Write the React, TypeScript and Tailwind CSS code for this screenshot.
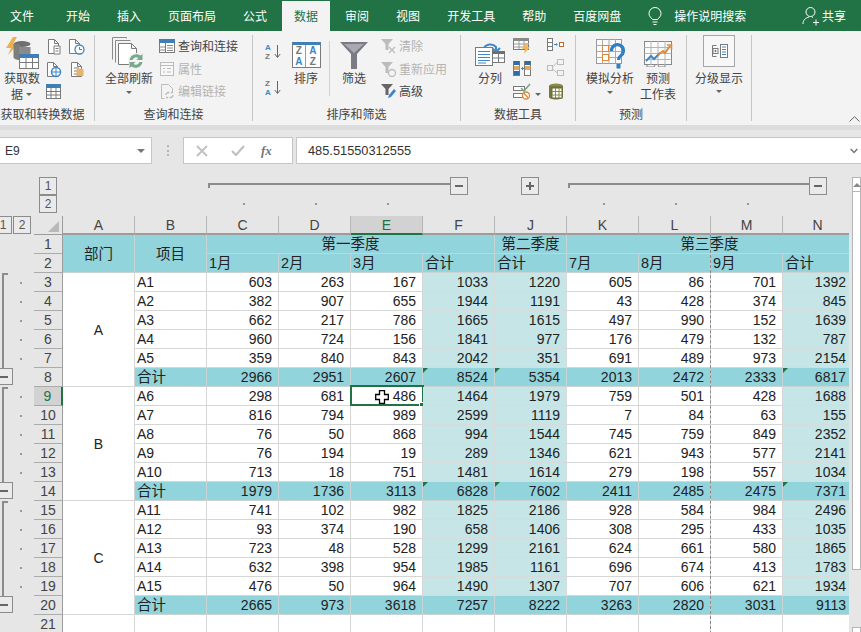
import React from 'react';

const line = '#7a7a7a';
const blue = '#3b87c8';
const orange = '#d98a3c';
const dim = '#bcbcbc';

type IconProps = { w?: number; h?: number; children: React.ReactNode };
const Svg: React.FC<IconProps> = ({ w = 18, h = 18, children }) => (
  <svg width={w} height={h} viewBox={`0 0 ${w} ${h}`} fill="none" className="block shrink-0">
    {children}
  </svg>
);

const Page = ({ c = line }: { c?: string }) => (
  <path d="M2.5 1.5h6l4 4v10h-10z M8.5 1.5v4h4" stroke={c} fill="#fff" />
);

const GetDataIcon = () => (
  <Svg w={36} h={34}>
    <path d="M9 1 2 12h5l-3 7 10-11H9l4-7z" fill="#eeb04f" />
    <ellipse cx="18" cy="8" rx="8.5" ry="3" fill="#6f6f6f" />
    <path d="M9.5 8v13c0 2 3 3 6 3V8z" fill="#7d7d7d" />
    <path d="M15 11h11.500v7H15z" fill="#8a8a8a" />
    <rect x="15.500" y="18.500" width="19" height="14" fill="#fff" stroke={line} />
    <rect x="15" y="18" width="20" height="4" fill="#3f7fb8" />
    <path d="M15.500 26.500h19M22 22v10M28.500 22v10" stroke={line} />
  </Svg>
);

const TableSmall = () => (
  <Svg w={17} h={17}>
    <rect x="1.500" y="1.500" width="14" height="14" fill="#fff" stroke={line} />
    <rect x="1" y="1" width="15" height="4" fill="#3f7fb8" />
    <path d="M1.500 8.500h14M1.500 12h14M6 5v10M11 5v10" stroke={line} />
  </Svg>
);

const RefreshAll = () => (
  <Svg w={36} h={34}>
    <path d="M1.500 1.500h14v1M1.500 1.500v22M4.500 4.500h15M4.500 4.500v22" stroke="#8a8a8a" fill="none" />
    <path d="M7.500 7.500h13l5 5v14l-2 2h-16z M20.500 7.500v5h5" stroke={line} fill="#fff" />
    <circle cx="25" cy="25" r="8" fill="#f3f3f3" />
    <path d="M18.500 24a7 7 0 0 1 11-4.500l2-1.500v6h-6l2-2a4 4 0 0 0-6 2z" fill="#79a98a" />
    <path d="M31.500 26a7 7 0 0 1-11 4.500l-2 1.500v-6h6l-2 2a4 4 0 0 0 6-2z" fill="#79a98a" />
  </Svg>
);

const ConnIcon = () => (
  <Svg w={17} h={15}>
    <rect x=".5" y=".5" width="15" height="13" fill="#fff" stroke={line} />
    <rect x="0" y="0" width="16" height="4" fill="#3f7fb8" />
    <path d="M1 8h5M1 11h5M8 6.500h6M8 9h6M8 11.500h6" stroke="#8a8a8a" />
    <path d="M6.500 4v10" stroke={line} />
  </Svg>
);

const PropsIcon = () => (
  <Svg w={16} h={16}>
    <rect x="1.500" y="1.500" width="13" height="13" stroke={dim} fill="#f7f7f7" />
    <path d="M1.500 4.500h13M4 7.500h2M8 7.500h4M4 11h2M8 11h4" stroke={dim} />
  </Svg>
);

const EditLinks = () => (
  <Svg w={17} h={17}>
    <path d="M2.500 1.500h7l4 4v4M2.500 1.500v14h3" stroke={dim} />
    <path d="M7 12a2.500 2.500 0 0 1 2.500-2.500h1M14 12a2.500 2.500 0 0 1-2.500 2.500h-1M7 14.500h2M12 9.500h2" stroke={dim} strokeWidth="1.300" />
  </Svg>
);

const SortAZ = ({ flip }: { flip?: boolean }) => (
  <div className="relative h-[18px] w-[16px] font-['Liberation_Sans',sans-serif] text-[8px] font-bold leading-[9px]">
    <div className={flip ? 'text-[#777]' : 'text-[#3b87c8]'}>{flip ? 'Z' : 'A'}</div>
    <div className={flip ? 'text-[#3b87c8]' : 'text-[#777]'}>{flip ? 'A' : 'Z'}</div>
    <svg width="7" height="14" viewBox="0 0 7 14" className="absolute right-0 top-[2px]">
      <path d="M3.500 0v12M.8 9l2.700 3.500L6.200 9" stroke="#666" fill="none" />
    </svg>
  </div>
);

const SortBig = () => (
  <div className="grid h-[26px] w-[29px] grid-cols-2 border border-[#7a7a7a] border-t-[3px] border-t-[#3f7fb8] bg-white font-['Liberation_Sans',sans-serif] text-[10px] font-bold leading-[11px]">
    <div className="border-r border-[#999] text-center text-[#777]">Z<div className="text-[#3b87c8]">A</div></div>
    <div className="text-center text-[#3b87c8]">A<div className="text-[#777]">Z</div></div>
  </div>
);

const Funnel = () => (
  <Svg w={28} h={27}>
    <path d="M0 0h28L17 12v15h-6V12z" fill="#7b7b85" />
    <path d="M4 2h20l-10 9z" fill="#a9a9b0" />
  </Svg>
);

const SmallFunnel = ({ c, children }: { c: string; children?: React.ReactNode }) => (
  <Svg w={17} h={16}>
    <path d="M1 1h12L8.500 6v6h-3V6z" fill={c} />
    {children}
  </Svg>
);

const TextToCols = () => (
  <Svg w={30} h={27}>
    <path d="M9 8a7 6 0 0 1 12-1l0 3" stroke={blue} strokeWidth="2" />
    <path d="M17 8l4 4 4-4" stroke={blue} strokeWidth="2" />
    <rect x=".5" y="7.500" width="17" height="18" fill="#fff" stroke={line} />
    <path d="M3 11.500h12M3 14.500h12M3 17.500h12M3 20.500h12M3 23h8" stroke={blue} />
    <rect x="17.500" y="11.500" width="12" height="11" fill="#fff" stroke={line} />
    <rect x="17" y="11" width="13" height="3" fill="#6f6f6f" />
    <path d="M23.500 14v8M18 18h11" stroke={line} />
  </Svg>
);

const FlashFill = () => (
  <Svg w={18} h={16}>
    <rect x=".5" y=".5" width="15" height="11" fill="#fff" stroke={line} />
    <rect x="0" y="0" width="16" height="3" fill="#8a8a8a" />
    <path d="M1 6h14M1 9h14M6 3v8M11 3v8" stroke="#9a9a9a" />
    <path d="M13 5 9 11h3l-1 5 6-7h-3l2-4z" fill="#efb65c" />
  </Svg>
);

const RemoveDup = () => (
  <Svg w={18} h={17}>
    <rect x=".5" y="1.500" width="6" height="14" fill="#fff" stroke={line} />
    <rect x="11.500" y="1.500" width="6" height="14" fill="#fff" stroke={line} />
    <rect x="1" y="1" width="5.500" height="4" fill="#2f6da8" />
    <rect x="1" y="6" width="5.500" height="4" fill="#e0a860" />
    <rect x="1" y="11" width="5.500" height="4" fill="#2f6da8" />
    <rect x="12" y="1" width="5.500" height="4" fill="#2f6da8" />
    <rect x="12" y="6" width="5.500" height="4" fill="#e0a860" />
    <path d="M8 8.500h3M9.500 7v3" stroke={blue} />
  </Svg>
);

const Validate = () => (
  <Svg w={18} h={17}>
    <rect x=".5" y="3.500" width="11" height="4" fill="#fff" stroke={line} />
    <rect x=".5" y="10.500" width="9" height="4" fill="#fff" stroke={line} />
    <path d="M8 5l3 3 6-7" stroke="#7fa58c" strokeWidth="1.600" />
    <circle cx="13" cy="12.500" r="3.500" fill="#fff" stroke={orange} strokeWidth="1.300" />
    <path d="M10.800 10.300l4.400 4.400" stroke={orange} strokeWidth="1.300" />
  </Svg>
);

const Consolidate = () => (
  <Svg w={17} h={14}>
    <rect x=".5" y=".5" width="5" height="12" fill="#fff" stroke={line} />
    <path d="M.5 4.500h5M.5 8.500h5" stroke={line} />
    <path d="M7 6.500h3" stroke={blue} />
    <path d="M9 5l2 1.500L9 8z" fill={blue} />
    <rect x="12.500" y="4.500" width="4" height="4" fill="#fff" stroke="#c0672a" />
  </Svg>
);

const Relations = () => (
  <Svg w={17} h={17}>
    <rect x=".5" y="6.500" width="5" height="5" stroke={dim} />
    <rect x="10.500" y=".5" width="6" height="5" stroke={dim} />
    <rect x="10.500" y="11.500" width="6" height="5" stroke={dim} />
    <path d="M5.500 8l5-5M5.500 10l5 4" stroke={dim} />
  </Svg>
);

const DataModel = () => (
  <Svg w={16} h={17}>
    <ellipse cx="8" cy="3" rx="7" ry="2.500" fill="#8a8a4a" />
    <path d="M1 3v11c0 1.500 3 2.500 7 2.500s7-1 7-2.500V3z" fill="#77773a" />
    <rect x="4" y="5" width="10" height="10" fill="#fff" stroke="#6b6b35" />
    <path d="M4 8.500h10M4 12h10M7.500 5v10M11 5v10" stroke="#8a8a4a" />
  </Svg>
);

const WhatIf = () => (
  <Svg w={29} h={31}>
    <rect x=".5" y=".5" width="25" height="24" fill="#fbfbfb" stroke="#999" />
    <path d="M.5 6.500h25M.5 12.500h25M.5 18.500h25M6.500 0v25M13 0v25M19.500 0v25" stroke="#aaa" />
    <rect x="6.500" y="6.500" width="6" height="6" fill="#fff" stroke={orange} />
    <rect x="6.500" y="15.500" width="6" height="6" fill="#fff" stroke={orange} />
    <path d="M15.500 12a6 6 0 1 1 9.500 4.500c-2 1.500-2.500 2.500-2.500 4.500" stroke="#2f7fc1" strokeWidth="3.200" />
    <rect x="20.500" y="25" width="4" height="4.500" fill="#2f7fc1" />
  </Svg>
);

const Forecast = () => (
  <Svg w={29} h={26}>
    <rect x=".5" y=".5" width="27" height="23" fill="#fbfbfb" stroke="#888" />
    <path d="M.5 6.500h27M.5 12.500h27M.5 18.500h27M7 0v24M14 0v24M21 0v24" stroke="#b5b5b5" />
    <path d="M2 20l5-5 3 3 6-6" stroke={blue} strokeWidth="2" />
    <path d="M14 14l5-4 2 2 5-7" stroke={orange} strokeWidth="2" />
    <path d="M23 4h4.500v4.500" stroke={orange} strokeWidth="1.600" />
    <path d="M3 24v2h7l1-2M14 24l1 2h6v-2" stroke="#888" />
  </Svg>
);

const OutlineIcon = () => (
  <Svg w={17} h={14}>
    <path d="M5.500 1.500h-4v11h4" stroke={line} />
    <rect x="2" y="4.500" width="5" height="5" fill="#fff" stroke={line} />
    <path d="M3.300 7h2.400M4.500 5.800v2.400" stroke={line} />
    <rect x="9.500" y=".5" width="7" height="13" fill="#fff" stroke={line} />
    <path d="M11 3h4M11 5.500h4M11 8h4M11 10.500h4" stroke={blue} />
  </Svg>
);

const Caret = () => <span className="inline-block h-0 w-0 border-x-[3px] border-t-[3px] border-x-transparent border-t-[#666]" />;

const Big = ({ icon, lines, caret, cls = '', iconCls = '' }: { icon: React.ReactNode; lines: string[]; caret?: boolean; cls?: string; iconCls?: string }) => (
  <div className={`flex shrink-0 flex-col items-center ${cls}`}>
    <div className={`flex h-[35px] items-center justify-center ${iconCls}`}>{icon}</div>
    {lines.map((t) => (
      <div key={t} className="h-[16px] whitespace-nowrap text-[12px] leading-[16px]">{t}</div>
    ))}
    {caret && <div className="flex h-[12px] items-center"><Caret /></div>}
  </div>
);

const Small = ({ icon, text, off }: { icon: React.ReactNode; text: string; off?: boolean }) => (
  <div className={`flex h-[22.5px] items-center gap-[2px] whitespace-nowrap text-[12px] leading-[16px] ${off ? 'text-[#b4b4b4]' : 'text-[#444]'}`}>
    <span className="flex w-[18px] justify-center">{icon}</span>
    {text}
  </div>
);

const Group = ({ label, cls, labelCls = '', children }: { label: string; cls: string; labelCls?: string; children: React.ReactNode }) => (
  <div className={`flex h-[86px] shrink-0 flex-col border-r border-[#c6c6c6] ${cls}`}>
    <div className="flex h-[71px] overflow-visible">{children}</div>
    <div className={`h-[15px] whitespace-nowrap text-center text-[12px] leading-[15px] text-[#444] ${labelCls}`}>{label}</div>
  </div>
);

const IconCol = ({ cls, children }: { cls: string; children: React.ReactNode }) => (
  <div className={`flex h-[65px] shrink-0 flex-col items-center justify-between pt-[3px] ${cls}`}>{children}</div>
);

const tabs = ['开始', '插入', '页面布局', '公式', '数据', '审阅', '视图', '开发工具', '帮助', '百度网盘'];

const TabBar = () => (
  <div className="flex h-[31px] shrink-0 items-end bg-[#217346] text-[12px] text-white">
    <div className="flex h-[30px] items-center pl-[10px] pr-[20px]">文件</div>
    <div className="flex gap-[3px]">
      {tabs.map((t) => (
        <div key={t} className={`flex h-[30px] items-center px-[12px] ${t === '数据' ? 'bg-[#f3f3f3] text-[#217346]' : ''}`}>{t}</div>
      ))}
    </div>
    <div className="ml-[15px] flex h-[30px] items-center">
      <svg width="14" height="19" viewBox="0 0 14 19" fill="none" stroke="#fff">
        <path d="M4.500 12.500C3 10.500 1 9.500 1 6.500a6 6 0 0 1 12 0c0 3-2 4-3.500 6zM4.500 15h5M5.500 17.500h3" />
      </svg>
      <span className="ml-[12px]">操作说明搜索</span>
    </div>
    <div className="ml-auto flex h-[30px] items-center pr-[15px]">
      <svg width="19" height="20" viewBox="0 0 19 20" fill="none" stroke="#fff">
        <circle cx="8.500" cy="6" r="4.500" />
        <path d="M1 18c0-4 2.500-6 6-7M10 11l1 .5M11 16.500h6M14 13.500v6" />
      </svg>
      <span className="ml-[1px]">共享</span>
    </div>
  </div>
);

const Ribbon = () => (
  <div className="flex h-[94px] shrink-0 bg-[#f3f3f3] pt-[4px] text-[#444]">
    <Group label="获取和转换数据" cls="w-[95px]" labelCls="pr-[9px]">
      <Big cls="ml-[2px] w-[40px]" icon={<GetDataIcon />} lines={['获取数']} />
      <div className="absolute mt-[51px] ml-[11px] flex h-[16px] items-center gap-[3px] text-[12px] leading-[16px]">据<Caret /></div>
      <IconCol cls="ml-[3px] w-[17px]">
        <Svg w={15} h={17}><Page /><path d="M8 8h6v8H8zM9.500 10.500h3M9.500 13h3" stroke={line} fill="#fff" /></Svg>
        <Svg w={17} h={17}><Page /><circle cx="11" cy="11" r="4.500" fill="#fff" stroke={blue} strokeWidth="1.500" /><path d="M6.500 11h9M11 6.500v9" stroke={blue} /></Svg>
        <TableSmall />
      </IconCol>
      <IconCol cls="ml-[5px] w-[18px]">
        <Svg w={18} h={17}><Page /><circle cx="12.500" cy="11.500" r="4.500" fill="#fff" stroke={blue} strokeWidth="1.300" /><path d="M12.500 9v2.500h2.500" stroke={blue} /></Svg>
        <Svg w={15} h={17}><Page /><path d="M5 7h5M5 10h4M5 13h4" stroke={line} /><ellipse cx="11" cy="9" rx="3.500" ry="1.500" fill="#e7b26b" /><path d="M7.500 9v6h7V9z" fill="#e7b26b" /></Svg>
        <span className="h-[17px]" />
      </IconCol>
    </Group>
    <Group label="查询和连接" cls="w-[158px]">
      <Big cls="ml-[10px] w-[48px]" icon={<RefreshAll />} lines={['全部刷新']} caret />
      <div className="ml-[5px] flex flex-col">
        <Small icon={<ConnIcon />} text="查询和连接" />
        <Small icon={<PropsIcon />} text="属性" off />
        <Small icon={<EditLinks />} text="编辑链接" off />
      </div>
    </Group>
    <Group label="排序和筛选" cls="w-[208px]">
      <div className="ml-[12px] flex h-[62px] w-[16px] shrink-0 flex-col justify-between pt-[8px]">
        <SortAZ />
        <SortAZ flip />
      </div>
      <Big cls="ml-[7px] w-[36px]" icon={<SortBig />} lines={['排序']} iconCls="pt-[5px]" />
      <div className="ml-[5px] mt-[6px] h-[55px] w-px shrink-0 bg-[#d0d0d0]" />
      <Big cls="ml-[6px] w-[36px]" icon={<Funnel />} lines={['筛选']} iconCls="pt-[5px]" />
      <div className="ml-[7px] flex flex-col">
        <Small off text="清除" icon={<SmallFunnel c={dim}><path d="M9 9l6 6M15 9l-6 6" stroke={dim} strokeWidth="1.300" /></SmallFunnel>} />
        <Small off text="重新应用" icon={<SmallFunnel c={dim}><circle cx="12" cy="12" r="3.500" stroke={dim} strokeWidth="1.300" /></SmallFunnel>} />
        <Small text="高级" icon={<SmallFunnel c="#666"><path d="M8 15l1-3 5-6 2 2-5 6z" fill={blue} /></SmallFunnel>} />
      </div>
    </Group>
    <Group label="数据工具" cls="w-[115px]">
      <Big cls="ml-[13px] w-[32px]" icon={<TextToCols />} lines={['分列']} iconCls="pt-[2px]" />
      <IconCol cls="ml-[6px] w-[20px]">
        <FlashFill />
        <RemoveDup />
        <Validate />
      </IconCol>
      <div className="mt-[51px] ml-[3px] flex h-[16px] items-center"><Caret /></div>
      <IconCol cls="ml-[6px] w-[17px]">
        <Consolidate />
        <Relations />
        <DataModel />
      </IconCol>
    </Group>
    <Group label="预测" cls="w-[111px]">
      <Big cls="ml-[10px] w-[48px]" icon={<WhatIf />} lines={['模拟分析']} caret iconCls="pt-[4px]" />
      <Big cls="ml-[6px] w-[36px]" icon={<Forecast />} lines={['预测', '工作表']} iconCls="pt-[2px]" />
    </Group>
    <Group label="" cls="w-[65px]">
      <div className="ml-[8px] flex w-[48px] shrink-0 flex-col items-center">
        <div className="flex h-[32px] w-[32px] items-center justify-center border border-[#a6a6a6] bg-[#f7f7f7]"><OutlineIcon /></div>
        <div className="mt-[3px] h-[16px] whitespace-nowrap text-[12px] leading-[16px]">分级显示</div>
        <div className="flex h-[10px] items-center"><Caret /></div>
      </div>
    </Group>
    <div className="flex flex-1 items-end justify-end pb-[3px] pr-[1px]">
      <svg width="11" height="6" viewBox="0 0 11 6" fill="none" stroke="#666"><path d="M.5 5.500 5.500 .7l5 4.800" /></svg>
    </div>
  </div>
);

const FormulaBar = () => (
  <div className="flex h-[34px] shrink-0 items-end">
    <div className="flex h-[27px] w-[152px] shrink-0 items-center justify-between border border-l-0 border-[#c6c6c6] bg-white pl-[5px] pr-[6px] font-['Liberation_Sans',sans-serif] text-[12px] text-[#333]">
      E9
      <span className="h-0 w-0 border-x-[4px] border-t-[4px] border-x-transparent border-t-[#777]" />
    </div>
    <div className="flex h-[27px] w-[31px] shrink-0 items-center justify-center">
      <div className="h-[11px] w-[2px] border-y-[2px] border-[#b5b5b5] bg-[linear-gradient(#b5b5b5,#b5b5b5)] bg-[length:2px_2px] bg-center bg-no-repeat" />
    </div>
    <div className="flex h-[27px] w-[110px] shrink-0 items-center border border-[#c6c6c6] bg-white">
      <svg width="12" height="12" viewBox="0 0 12 12" className="ml-[12px]" stroke="#c0c0c0" strokeWidth="1.800" fill="none"><path d="M1 1l10 10M11 1 1 11" /></svg>
      <svg width="14" height="12" viewBox="0 0 14 12" className="ml-[23px]" stroke="#c0c0c0" strokeWidth="2.200" fill="none"><path d="M1 6l4 4 8-9" /></svg>
      <span className="ml-[16px] font-['Liberation_Serif',serif] text-[13px] font-bold italic text-[#777]">fx</span>
    </div>
    <div className="ml-[3px] flex h-[27px] flex-1 items-center justify-between border border-r-0 border-[#c6c6c6] bg-white pl-[11px] pr-[3px] font-['Liberation_Sans',sans-serif] text-[12.800px] text-[#333]">
      485.51550312555
      <svg width="8" height="6" viewBox="0 0 8 6" stroke="#777" strokeWidth="1.500" fill="none"><path d="M.7 1 4 4.500 7.300 1" /></svg>
    </div>
  </div>
);

const LevelBox = ({ t, cls = '' }: { t: string; cls?: string }) => (
  <div className={`flex shrink-0 items-center justify-center border border-[#8c8c8c] bg-[#eaeaea] font-['Liberation_Sans',sans-serif] text-[12px] leading-none text-[#555] ${cls}`}>{t}</div>
);

const OutlineBtn = ({ plus, cls = '' }: { plus?: boolean; cls?: string }) => (
  <div className={`flex shrink-0 items-center justify-center border border-[#8c8c8c] bg-[#eaeaea] ${cls}`}>
    <svg width="10" height="10" viewBox="0 0 10 10" stroke="#666" strokeWidth="2"><path d={plus ? 'M1 5h8M5 1v8' : 'M1 5h8'} /></svg>
  </div>
);

const OutlineBar = ({ cls }: { cls: string }) => (
  <div className={`mt-[6px] h-[5px] shrink-0 border-l-2 border-t-2 border-[#8c8c8c] ${cls}`} />
);

const OutlineTop = () => (
  <div className="h-[52px] shrink-0 pt-[13px]">
    <div className="flex h-[18px]">
      <LevelBox t="1" cls="ml-[39px] h-[18px] w-[18px]" />
      <OutlineBar cls="ml-[151px] w-[242px]" />
      <OutlineBtn cls="h-[18px] w-[18px]" />
      <OutlineBtn plus cls="ml-[53px] h-[18px] w-[18px]" />
      <OutlineBar cls="ml-[29px] w-[241px]" />
      <OutlineBtn cls="h-[18px] w-[18px]" />
    </div>
    <div className="flex h-[18px] items-center">
      <LevelBox t="2" cls="ml-[39px] h-[18px] w-[18px]" />
      {['ml-[186px]', 'ml-[70px]', 'ml-[70px]', 'ml-[214px]', 'ml-[70px]', 'ml-[70px]'].map((m, i) => (
        <span key={i} className={`h-[2px] w-[2px] shrink-0 bg-[#999] ${m}`} />
      ))}
    </div>
  </div>
);

type Row = [string, ...number[]];
const rows: Row[] = [
  ['A1', 603, 263, 167, 1033, 1220, 605, 86, 701, 1392],
  ['A2', 382, 907, 655, 1944, 1191, 43, 428, 374, 845],
  ['A3', 662, 217, 786, 1665, 1615, 497, 990, 152, 1639],
  ['A4', 960, 724, 156, 1841, 977, 176, 479, 132, 787],
  ['A5', 359, 840, 843, 2042, 351, 691, 489, 973, 2154],
  ['合计', 2966, 2951, 2607, 8524, 5354, 2013, 2472, 2333, 6817],
  ['A6', 298, 681, 486, 1464, 1979, 759, 501, 428, 1688],
  ['A7', 816, 794, 989, 2599, 1119, 7, 84, 63, 155],
  ['A8', 76, 50, 868, 994, 1544, 745, 759, 849, 2352],
  ['A9', 76, 194, 19, 289, 1346, 621, 943, 577, 2141],
  ['A10', 713, 18, 751, 1481, 1614, 279, 198, 557, 1034],
  ['合计', 1979, 1736, 3113, 6828, 7602, 2411, 2485, 2475, 7371],
  ['A11', 741, 102, 982, 1825, 2186, 928, 584, 984, 2496],
  ['A12', 93, 374, 190, 658, 1406, 308, 295, 433, 1035],
  ['A13', 723, 48, 528, 1299, 2161, 624, 661, 580, 1865],
  ['A14', 632, 398, 954, 1985, 1161, 696, 674, 413, 1783],
  ['A15', 476, 50, 964, 1490, 1307, 707, 606, 621, 1934],
  ['合计', 2665, 973, 3618, 7257, 8222, 3263, 2820, 3031, 9113],
];

const cols = ['A', 'B', 'C', 'D', 'E', 'F', 'J', 'K', 'L', 'M', 'N'];
const months = ['1月', '2月', '3月', '合计', '合计', '7月', '8月', '9月', '合计'];
const sumCols = [3, 4, 8];

const teal = 'bg-[#92d4dc] border-r border-b border-[#c9d3d4]';
const plain = 'bg-white border-r border-b border-[#d6d6d6]';
const pale = 'bg-[#c5e5e7] border-r border-b border-[#d6dcdc]';
const rowHead = 'flex items-center justify-center border-b border-r border-b-[#ababab] border-r-[#9c9c9c] text-[#444]';

const Gutter = ({ n }: { n: number }) => {
  if (n === 8 || n === 14 || n === 20) {
    return (
      <div className="overflow-hidden">
        <OutlineBtn cls="-ml-[6px] h-[17px] w-[19px]" />
      </div>
    );
  }
  if (n < 3 || n > 20) return <div />;
  const first = n === 3 || n === 9 || n === 15;
  return (
    <div className={`ml-[2px] flex items-center border-l-2 border-[#8c8c8c] ${first ? 'relative' : ''}`}>
      {first && <span className="absolute -left-[2px] top-0 h-[2px] w-[6px] bg-[#8c8c8c]" />}
      <span className="ml-[16px] h-[2px] w-[2px] bg-[#999]" />
    </div>
  );
};

const Sheet = () => (
  <div className="relative grid grid-cols-[34px_29px_72px_72px_72px_72px_72px_72px_72px_72px_72px_72px_70px] auto-rows-[19px] font-['Liberation_Sans','Noto_Sans_CJK_SC',sans-serif] text-[14px] leading-[18px] text-[#222]">
    <div className="flex gap-[1px]">
      <LevelBox t="1" cls="-ml-[6px] h-[18px] w-[18px]" />
      <LevelBox t="2" cls="h-[18px] w-[18px]" />
    </div>
    <div className="flex items-end justify-end border-b border-r border-[#9c9c9c] pb-[2px] pr-[3px]">
      <span className="h-0 w-0 border-b-[11px] border-l-[11px] border-b-[#b9b9b9] border-l-transparent" />
    </div>
    {cols.map((c) => (
      <div key={c} className={`flex items-center justify-center border-r border-b-2 text-[14px] ${c === 'E' ? 'border-b-[#217346] border-r-[#b5b5b5] bg-[#d2d2d2] text-[#217346]' : 'border-b-[#9c9c9c] border-r-[#b5b5b5] text-[#444]'}`}>{c}</div>
    ))}

    <Gutter n={1} />
    <div className={rowHead}>1</div>
    <div className={`row-span-2 flex items-center justify-center text-[14.500px] ${teal}`}>部门</div>
    <div className={`row-span-2 flex items-center justify-center text-[14.500px] ${teal}`}>项目</div>
    <div className={`col-span-4 flex items-center justify-center text-[14.500px] ${teal}`}>第一季度</div>
    <div className={`flex items-center justify-center text-[14.500px] ${teal}`}>第二季度</div>
    <div className={`col-span-4 flex items-center justify-center text-[14.500px] ${teal}`}>第三季度</div>

    <Gutter n={2} />
    <div className={rowHead}>2</div>
    {months.map((m, i) => (
      <div key={i} className={`pl-[2px] text-[14.500px] ${teal}`}>{m}</div>
    ))}

    {rows.map((r, i) => {
      const n = i + 3;
      const isSum = r[0] === '合计';
      const active = n === 9;
      return (
        <React.Fragment key={n}>
          <Gutter n={n} />
          <div className={`${rowHead} ${active ? 'bg-[#d2d2d2] !border-r-2 !border-r-[#217346] text-[#217346]' : ''}`}>{n}</div>
          {(n === 3 || n === 9 || n === 15) && (
            <div className={`row-span-6 flex items-center justify-center ${plain}`}>{n === 3 ? 'A' : n === 9 ? 'B' : 'C'}</div>
          )}
          <div className={`pl-[2px] ${isSum ? `text-[14.500px] ${teal}` : plain}`}>{r[0]}</div>
          {r.slice(1).map((v, j) => {
            const sel = active && j === 2;
            const bg = isSum ? teal : sumCols.includes(j) ? pale : plain;
            const mark = isSum && n !== 20 && sumCols.includes(j);
            return (
              <div key={j} className={`relative whitespace-nowrap pr-[6px] text-right ${bg}`}>
                {mark && <span className="absolute left-0 top-0 h-0 w-0 border-r-[5px] border-t-[5px] border-r-transparent border-t-[#217346]" />}
                {v}
                {sel && (
                  <>
                    <span className="absolute -left-px -top-[2px] h-[21px] w-[74px] border-2 border-[#217346]" />
                    <span className="absolute -bottom-[3px] -right-[3px] h-[5px] w-[5px] bg-[#217346] outline outline-1 outline-white" />
                    <svg width="14" height="14" viewBox="0 0 14 14" className="absolute left-[24px] top-[3px]">
                      <path d="M4.500 .7h5v3.800h3.800v5H9.500v3.800h-5V9.500H.7v-5h3.800z" fill="#fff" stroke="#000" strokeWidth="1.300" />
                    </svg>
                  </>
                )}
              </div>
            );
          })}
        </React.Fragment>
      );
    })}

    <Gutter n={21} />
    <div className={rowHead}>21</div>
    {cols.map((c) => (
      <div key={c} className={plain} />
    ))}

    <span className="absolute bottom-0 left-[710px] top-[19px] border-l border-dashed border-[#8a8a8a]" />
  </div>
);

const ScrollBar = () => (
  <div className="flex w-[12px] shrink-0 flex-col pl-[3px] pt-[13px]">
    <div className="flex h-[15px] items-center justify-center border border-[#b5b5b5] bg-white">
      <span className="h-0 w-0 border-x-[4px] border-b-[4px] border-x-transparent border-b-[#888]" />
    </div>
    <div className="h-[378px] border border-t-0 border-[#b5b5b5] bg-white" />
    <div className="flex-1 bg-[#e6e6e6]" />
    <div className="h-[5px] border border-b-0 border-[#b5b5b5] bg-white" />
  </div>
);

export default function App() {
  return (
    <div className="flex h-[632px] w-[861px] flex-col overflow-hidden bg-[#e6e6e6] font-['Noto_Sans_CJK_SC','Liberation_Sans',sans-serif]">
      <TabBar />
      <Ribbon />
      <div className="h-[5px] shrink-0 bg-[#dcdcdc]" />
      <FormulaBar />
      <div className="flex min-h-0 flex-1">
        <div className="w-[849px] shrink-0 overflow-hidden">
          <OutlineTop />
          <Sheet />
        </div>
        <ScrollBar />
      </div>
    </div>
  );
}
